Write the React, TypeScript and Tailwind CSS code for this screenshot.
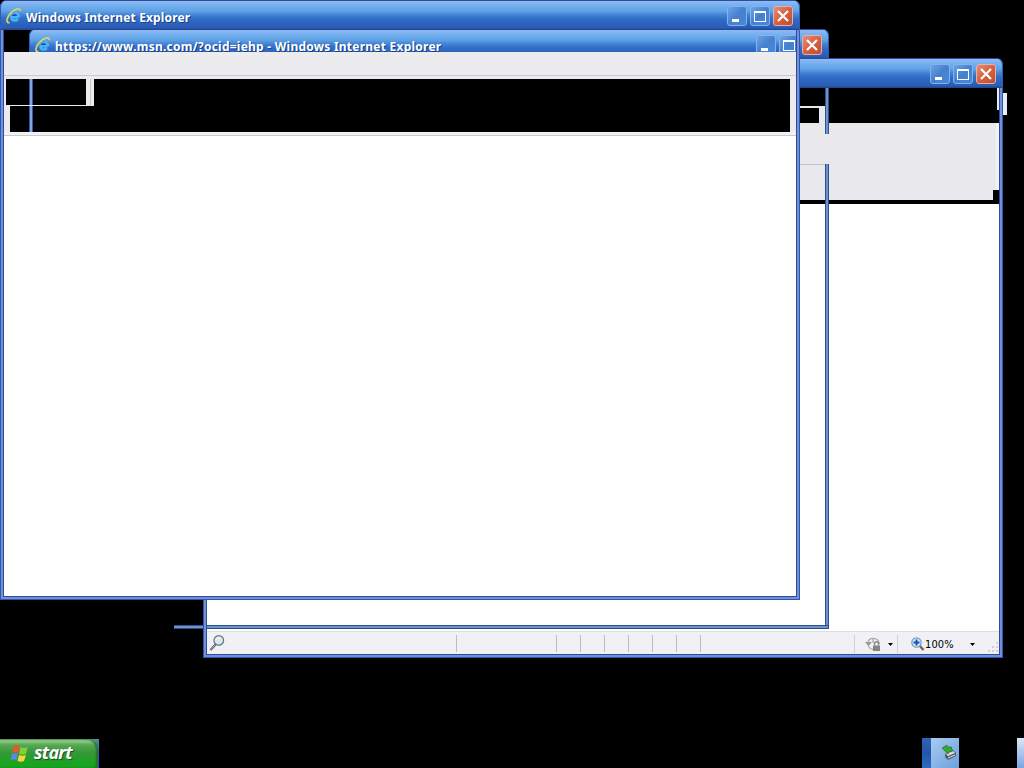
import type { ReactNode } from "react";

const titleGradient =
  "bg-[linear-gradient(to_bottom,#2b4f94_0px,#2b4f94_1px,#8fb9f7_1px,#82b2f2_4px,#6fb0ee_6px,#61a2e6_11px,#4282d4_15px,#306dc6_19px,#2c62bd_24px,#2a5cb6_28px,#244a8c_29px)]";

function IeIcon() {
  return (
    <svg className="h-4 w-4 shrink-0" viewBox="0 0 16 16" fill="none">
      <path d="M12.600 9.200H5.200c.2 3.800 4.400 4.100 6.800 2" stroke="#48b4f4" strokeWidth="2.600" />
      <path d="M4.300 9.400C3.600 3 12.800 2.600 13 9.200" stroke="#48b4f4" strokeWidth="2.500" />
      <path d="M6 7.900c.4-2.300 4.300-2.400 4.900 0z" fill="#1b4f9e" />
      <path d="M4.200 12.500C2.400 8 5 3.600 9 3.700" stroke="#1d6fc0" strokeWidth=".8" />
      <path d="M3.500 14.600C-1.500 15.500 1.500 6.500 8 2.500c4-2.400 6.600-2 6.300.7" stroke="#e9d35a" strokeWidth="1.600" />
    </svg>
  );
}

function CaptionButton({ kind }: { kind: "min" | "max" | "close" }) {
  const close = kind === "close";
  return (
    <span
      className={
        close
          ? "flex h-5 w-5 items-center justify-center rounded-[3px] border border-[#e3b0ae] bg-linear-to-br from-[#e08f7c] via-[#d8603f] to-[#c04d33]"
          : "flex h-5 w-5 items-center justify-center rounded-[3px] border border-[#84b2ec] bg-linear-to-br from-[#6da4e4] via-[#4480d0] to-[#4a88d8]"
      }
    >
      <svg className="h-[18px] w-[18px]" viewBox="0 0 18 18" fill="none" shapeRendering={close ? "auto" : "crispEdges"}>
        {kind === "min" && <path d="M4 12h7v3H4z" fill="#fff" />}
        {kind === "max" && <path d="M3 4h12v11H3zM4 6v8h10V6z" fill="#fff" fillRule="evenodd" />}
        {close && <path d="m4 4 10 10M14 4 4 14" stroke="#fff" strokeWidth="2.200" />}
      </svg>
    </span>
  );
}

function TitleBar({ title, tracking = "" }: { title?: string; tracking?: string }) {
  return (
    <div
      className={
        "flex h-[30px] w-full shrink-0 items-center rounded-t-[7px] pt-0.5 pr-[7px] pl-1.5 shadow-[inset_1px_0_0_#2f5cae,inset_-1px_0_0_#2f5cae] " +
        titleGradient
      }
    >
      {title && <IeIcon />}
      {title && (
        <span
          className={
            "mt-1 ml-1 font-['Noto_Sans',sans-serif] text-[12px] leading-4 font-bold whitespace-pre text-white [text-shadow:1px_1px_0_#1c3f80] " +
            tracking
          }
        >
          {title}
        </span>
      )}
      <span className="ml-auto flex gap-[3px]">
        <CaptionButton kind="min" />
        <CaptionButton kind="max" />
        <CaptionButton kind="close" />
      </span>
    </div>
  );
}

function Frame({ title, tracking, children }: { title?: string; tracking?: string; children: ReactNode }) {
  return (
    <div className="flex h-full w-full flex-col rounded-t-[7px]">
      <TitleBar title={title} tracking={tracking} />
      <div className="flex min-h-0 flex-1 border-x border-b border-[#3556ac]">
        <div className="flex min-h-0 min-w-0 flex-1 border-x-2 border-b-2 border-[#7290da]">
          <div className="flex min-h-0 min-w-0 flex-1 flex-col border-x border-b border-[#2c4c9c]">{children}</div>
        </div>
      </div>
    </div>
  );
}

function StatusBar() {
  return (
    <div className="flex h-[23px] shrink-0 items-center border-t border-[#dddde0] bg-[#f1f1f5] pt-px">
      <svg className="mb-0.5 ml-[2px] h-4 w-4" viewBox="0 0 16 16" fill="none">
        <path d="m6.500 9.500-5 5.500" stroke="#55555f" strokeWidth="2.200" />
        <path d="m6 10-4 4.500" stroke="#c9c9d0" strokeWidth=".8" />
        <circle cx="9.800" cy="5.400" r="4.800" fill="#dce8ef" stroke="#687383" strokeWidth="1.200" />
        <path d="M7 5c.5-2 3-2.500 4.500-1" stroke="#fff" />
      </svg>
      <span className="ml-[231px] h-[17px] w-[100px] border-l border-[#bcbcc3]" />
      {[0, 1, 2, 3, 4, 5].map((n) => (
        <span key={n} className="h-[17px] w-6 border-l border-[#bcbcc3]" />
      ))}
      <span className="h-[17px] w-[154px] border-l border-[#bcbcc3]" />
      <span className="flex h-[18px] w-[43px] items-center border-l border-[#d0d0d6] pl-2.5">
        <svg className="h-4 w-4" viewBox="0 0 16 16" fill="none">
          <path d="M3 7C3.500 1 13 .5 14.500 8M8 3v4M3 8c.5 3.500 2 5 5 5.500" stroke="#aaa" strokeWidth="1.300" />
          <path d="M0 6h7L3.500 10z" fill="#999" />
          <path d="M9.500 9.500V8c0-3 4-3 4 0v1.500" stroke="#888" strokeWidth="1.300" />
          <path d="M8 9.500h7V15H8z" fill="#858585" />
        </svg>
        <svg className="mt-0.5 ml-[7px] h-[3px] w-[5px]" viewBox="0 0 5 3"><path d="M0 0h5L2.500 3z" /></svg>
      </span>
      <span className="flex h-[18px] flex-1 items-center border-l border-[#d0d0d6] pl-[13px]">
        <svg className="h-[14px] w-[14px]" viewBox="0 0 14 14" fill="none">
          <path d="m8 8 4.500 5" stroke="#6d6c5c" strokeWidth="2.500" />
          <circle cx="5.500" cy="5.500" r="4.700" fill="#d6e9fb" stroke="#7299c8" strokeWidth="1.200" />
          <path d="M5.500 2.500v6M2.500 5.500h6" stroke="#1752b4" strokeWidth="1.900" />
        </svg>
        <span className="mt-0.5 font-['DejaVu_Sans_Condensed','DejaVu_Sans',sans-serif] text-[11px] leading-4 tracking-[0.1px] text-black">100%</span>
        <svg className="mt-0.5 ml-4 h-[3px] w-[5px]" viewBox="0 0 5 3"><path d="M0 0h5L2.500 3z" /></svg>
        <svg className="mt-auto ml-auto h-[11px] w-[11px]" viewBox="0 0 11 11" fill="#cfcfd4">
          <path d="M8 0h2v2H8zM4 4h2v2H4zM8 4h2v2H8zM0 8h2v2H0zM4 8h2v2H4zM8 8h2v2H8z" />
        </svg>
      </span>
    </div>
  );
}

export default function App() {
  return (
    <main className="relative h-[768px] w-[1024px] overflow-hidden bg-black">
      <div className="absolute top-[29px] left-[29px] w-[800px]">
        <TitleBar />
      </div>

      <div className="absolute top-[93px] left-[1002px] h-[22px] w-[5px] bg-[#e7eef8]" />
      <section className="absolute top-[58px] left-[203px] h-[600px] w-[800px]">
        <Frame>
          <div className="flex h-[35px] shrink-0 justify-end bg-black">
            <span className="h-[22px] w-[2px] bg-[#e4edf5]" />
          </div>
          <div className="flex h-[77px] shrink-0 bg-[#e9e8ec]">
            <span className="ml-auto flex w-[6px] flex-col">
              <span className="ml-auto h-[67px] w-[3px] bg-[#f0f4fa]" />
              <span className="h-[10px] bg-black" />
            </span>
          </div>
          <div className="h-1 shrink-0 bg-black" />
          <div className="flex-1 bg-white" />
          <StatusBar />
        </Frame>
      </section>

      <div className="absolute top-[106px] left-[799px] h-[17px] w-[26px] border-t-2 border-r-[6px] border-[#e9e8ec] bg-black" />
      <div className="absolute top-[164px] left-[799px] h-px w-[26px] bg-[#c5c5ca]" />
      <div className="absolute top-[88px] left-[825px] h-[46px] w-1 border-x border-[#2e4f91] bg-[#6b94cd]" />
      <div className="absolute top-[164px] left-[825px] h-[465px] w-1 border-x border-[#2e4f91] bg-[#6b94cd]" />
      <div className="absolute top-[625px] left-[207px] h-1 w-[621px] border-y border-[#2e4f91] bg-[#6b94cd]" />
      <div className="absolute top-[625px] left-[174px] h-1 w-[29px] border-y border-[#2e4f91] bg-[#6b94cd]" />

      <section className="absolute top-0 left-0 h-[600px] w-[800px]">
        <Frame title="Windows Internet Explorer" tracking="tracking-[0.14px]">
          <div className="flex h-[22px] shrink-0 overflow-hidden bg-black pl-[25px]">
            <div className="-mt-px w-[800px] shrink-0">
              <TitleBar title="https://www.msn.com/?ocid=iehp - Windows Internet Explorer" tracking="tracking-[0.24px]" />
            </div>
          </div>
          <div className="flex h-[27px] shrink-0 flex-col bg-[#ecebee]">
            <span className="mt-[23px] h-px bg-[#c9c9ce]" />
          </div>
          <div className="flex h-[53px] shrink-0 flex-col bg-[#ecebee] pr-[6px]">
            <div className="flex h-[27px]">
              <span className="ml-[2px] flex w-20 border-b border-[#ecebee] bg-black pl-[23px]">
                <span className="w-1 border-x border-[#36569b] bg-[#84a4e5]" />
              </span>
              <span className="flex w-2 justify-center bg-[#ecebee]">
                <span className="w-px bg-[#c8c8cd]" />
              </span>
              <span className="flex-1 bg-black" />
            </div>
            <div className="ml-[6px] flex flex-1 bg-black pl-[19px]">
              <span className="w-1 border-x border-[#36569b] bg-[#84a4e5]" />
            </div>
          </div>
          <div className="h-1 shrink-0 border-b border-[#c9c9ce] bg-[#f1f1f3]" />
          <div className="flex-1 bg-white" />
        </Frame>
      </section>

      <div className="absolute bottom-0 left-0 flex h-[29px] w-[99px] items-center bg-[linear-gradient(to_bottom,#4f9487_0px,#2c5fc0_12px,#2450b0)]">
        <div className="flex h-full w-[98px] items-center rounded-tr-[10px] rounded-br-[4px] bg-[linear-gradient(to_bottom,#5d9d5b_0px,#93cc8c_2px,#56a850_6px,#37963a_14px,#22a028_20px,#14a81c_29px)] pl-[10px] shadow-[inset_-2px_0_2px_#276f2c]">
          <svg className="h-[19px] w-[19px]" viewBox="0 0 19 19">
            <path d="M4 2q3-2 5.500 0L8 9Q5 7.500 2 9z" fill="#e9582b" />
            <path d="M10.500 3q3 2 7 0L16 10q-4 1.500-7 0z" fill="#83cf3a" />
            <path d="M2 10q3-1.500 6 0L6.500 16q-3-1.500-6 0z" fill="#5489ed" />
            <path d="M9 11q3 1.500 7 0l-2 6q-3 1.500-6.500 0z" fill="#fbd53c" />
          </svg>
          <span className="mb-[3px] ml-[5px] font-['Open_Sans',sans-serif] text-[18px] leading-6 font-bold tracking-[-0.75px] text-white italic [text-shadow:1px_1px_1px_#1f4d22]">start</span>
        </div>
      </div>
      <div className="absolute bottom-0 left-[922px] flex h-[30px] w-[37px] bg-[linear-gradient(to_bottom,#2f64b4,#2357aa_50%,#2f69bd)]">
        <div className="ml-[9px] flex flex-1 items-start justify-end bg-linear-to-br from-[#a9cbf1] via-[#8ab6e8] to-[#6b9fdd] pt-[6px] pr-[2px]">
          <svg className="h-4 w-4" viewBox="0 0 16 16">
            <path d="m4 10 8-4 3 3v3l-8 4-3-3z" fill="#53606a" />
            <path d="m5 10 7-3 2 2-7 3z" fill="#d4dbdf" />
            <path d="m7 14 7-3" stroke="#d4dbdf" />
            <path d="m1 4 5-3 .5 2 4 0 1 4-4 1-.5 2z" fill="#35aa32" stroke="#1c6c25" strokeWidth=".6" />
          </svg>
        </div>
      </div>
      <div className="absolute right-0 bottom-0 h-[30px] w-[7px] bg-linear-to-b from-[#d9e7f8] to-[#7da3df]" />
    </main>
  );
}
